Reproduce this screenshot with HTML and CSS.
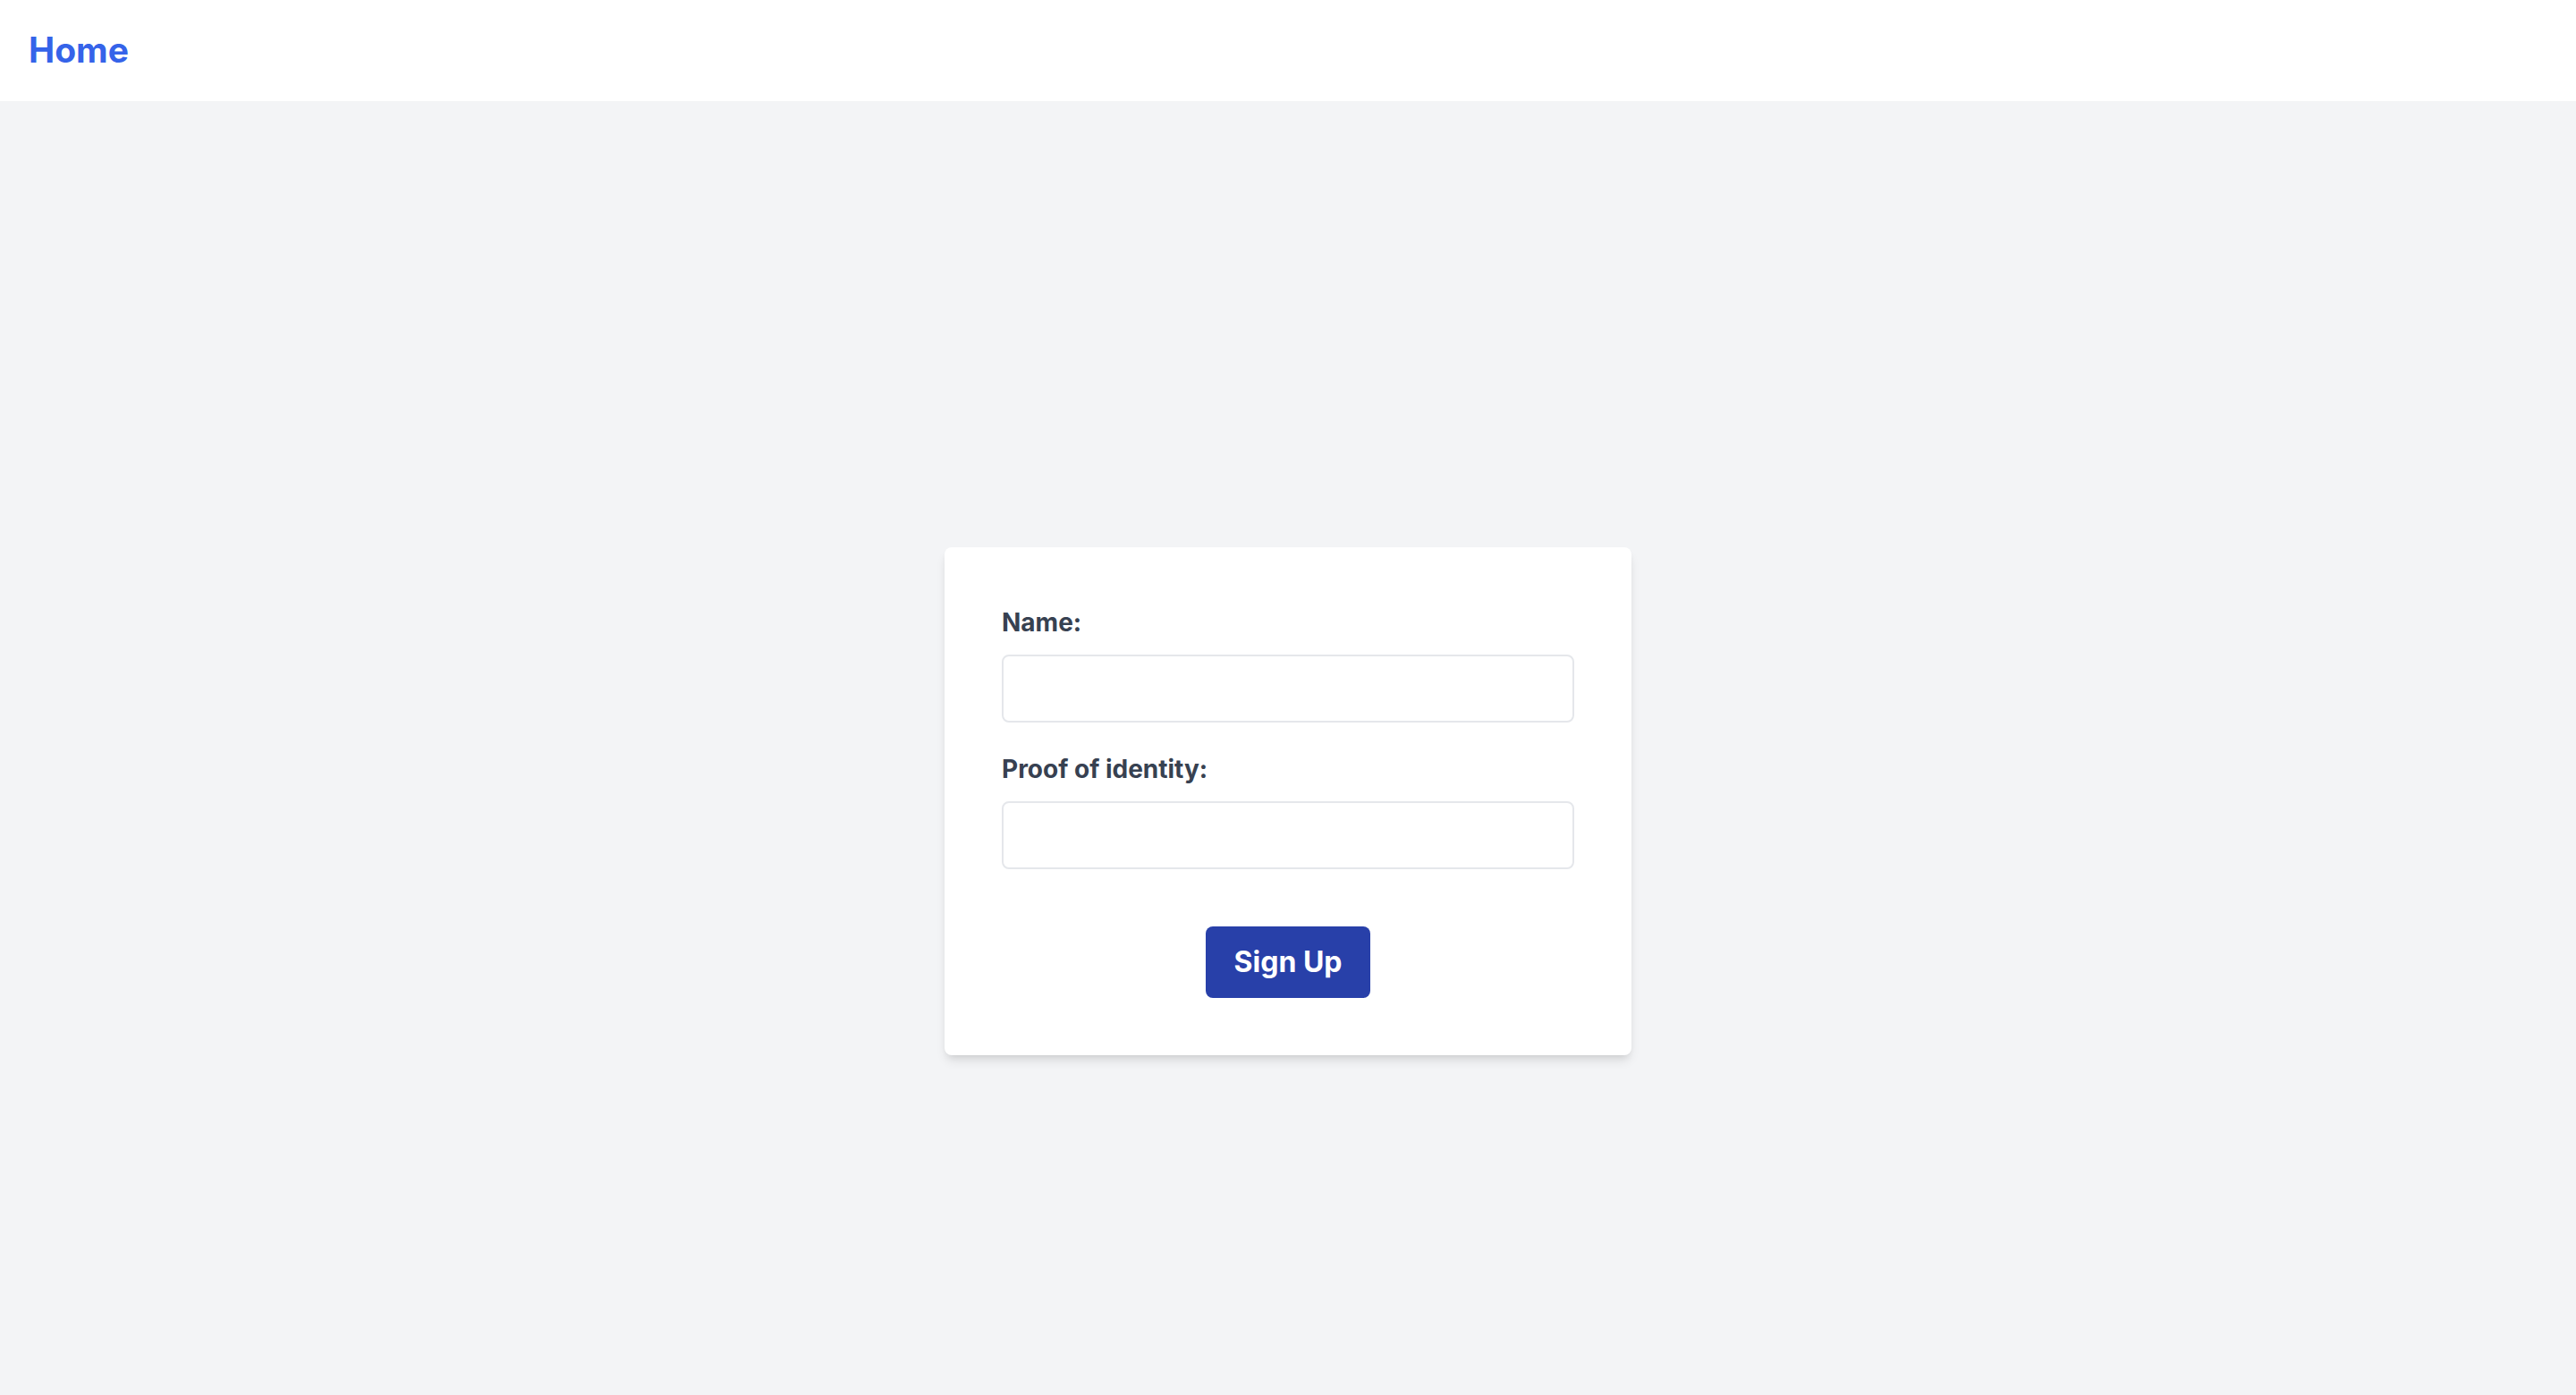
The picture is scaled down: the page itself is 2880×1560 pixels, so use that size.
FILE: index.html
```html
<!DOCTYPE html>
<html lang="en">
<head>
<meta charset="utf-8">
<title>Sign Up</title>
<link rel="stylesheet" href="styles.css">
</head>
<body>
<header class="topbar">
  <a class="home-link" href="#">Home</a>
</header>
<main class="page">
  <form class="card">
    <div class="field">
      <label class="field-label" for="name">Name:</label>
      <input class="field-input" id="name" type="text">
    </div>
    <div class="field">
      <label class="field-label" for="proof">Proof of identity:</label>
      <input class="field-input" id="proof" type="text">
    </div>
    <div class="actions">
      <button class="btn-primary" type="button">Sign Up</button>
    </div>
  </form>
</main>
</body>
</html>
```

FILE: styles.css
```css
* {
  box-sizing: border-box;
}

html, body {
  margin: 0;
  padding: 0;
}

body {
  font-family: Inter, "Noto Sans", "Liberation Sans", sans-serif;
  background: #f3f4f6;
  color: #374151;
}

.topbar {
  background: #ffffff;
  padding: 0 32px 2px;
  height: 113px;
  display: flex;
  align-items: center;
}

.home-link {
  font-size: 39px;
  font-weight: 700;
  color: #3563e9;
  text-decoration: none;
  line-height: 48px;
}

.page {
  min-height: 100vh;
  display: flex;
  align-items: center;
  justify-content: center;
  padding-top: 6px;
}

.card {
  width: 768px;
  background: #ffffff;
  border-radius: 8px;
  padding: 64px;
  box-shadow: 0 8px 12px -2px rgba(0, 0, 0, 0.1), 0 4px 8px -4px rgba(0, 0, 0, 0.1);
  display: flex;
  flex-direction: column;
}

.field {
  display: flex;
  flex-direction: column;
  margin-bottom: 32px;
}

.field-label {
  font-size: 28px;
  line-height: 40px;
  font-weight: 700;
  color: #374151;
  margin-bottom: 16px;
}

.field-input {
  width: 100%;
  height: 76px;
  border: 2px solid #e5e7eb;
  border-radius: 8px;
  background: #ffffff;
  font-family: inherit;
  font-size: 28px;
  padding: 0 24px;
  outline: none;
}

.actions {
  display: flex;
  justify-content: center;
  margin-top: 32px;
}

.btn-primary {
  height: 80px;
  padding: 0 32px;
  background: #2840a9;
  color: #ffffff;
  border: none;
  border-radius: 8px;
  font-family: inherit;
  font-size: 32px;
  font-weight: 700;
  line-height: 48px;
  cursor: pointer;
}
```
